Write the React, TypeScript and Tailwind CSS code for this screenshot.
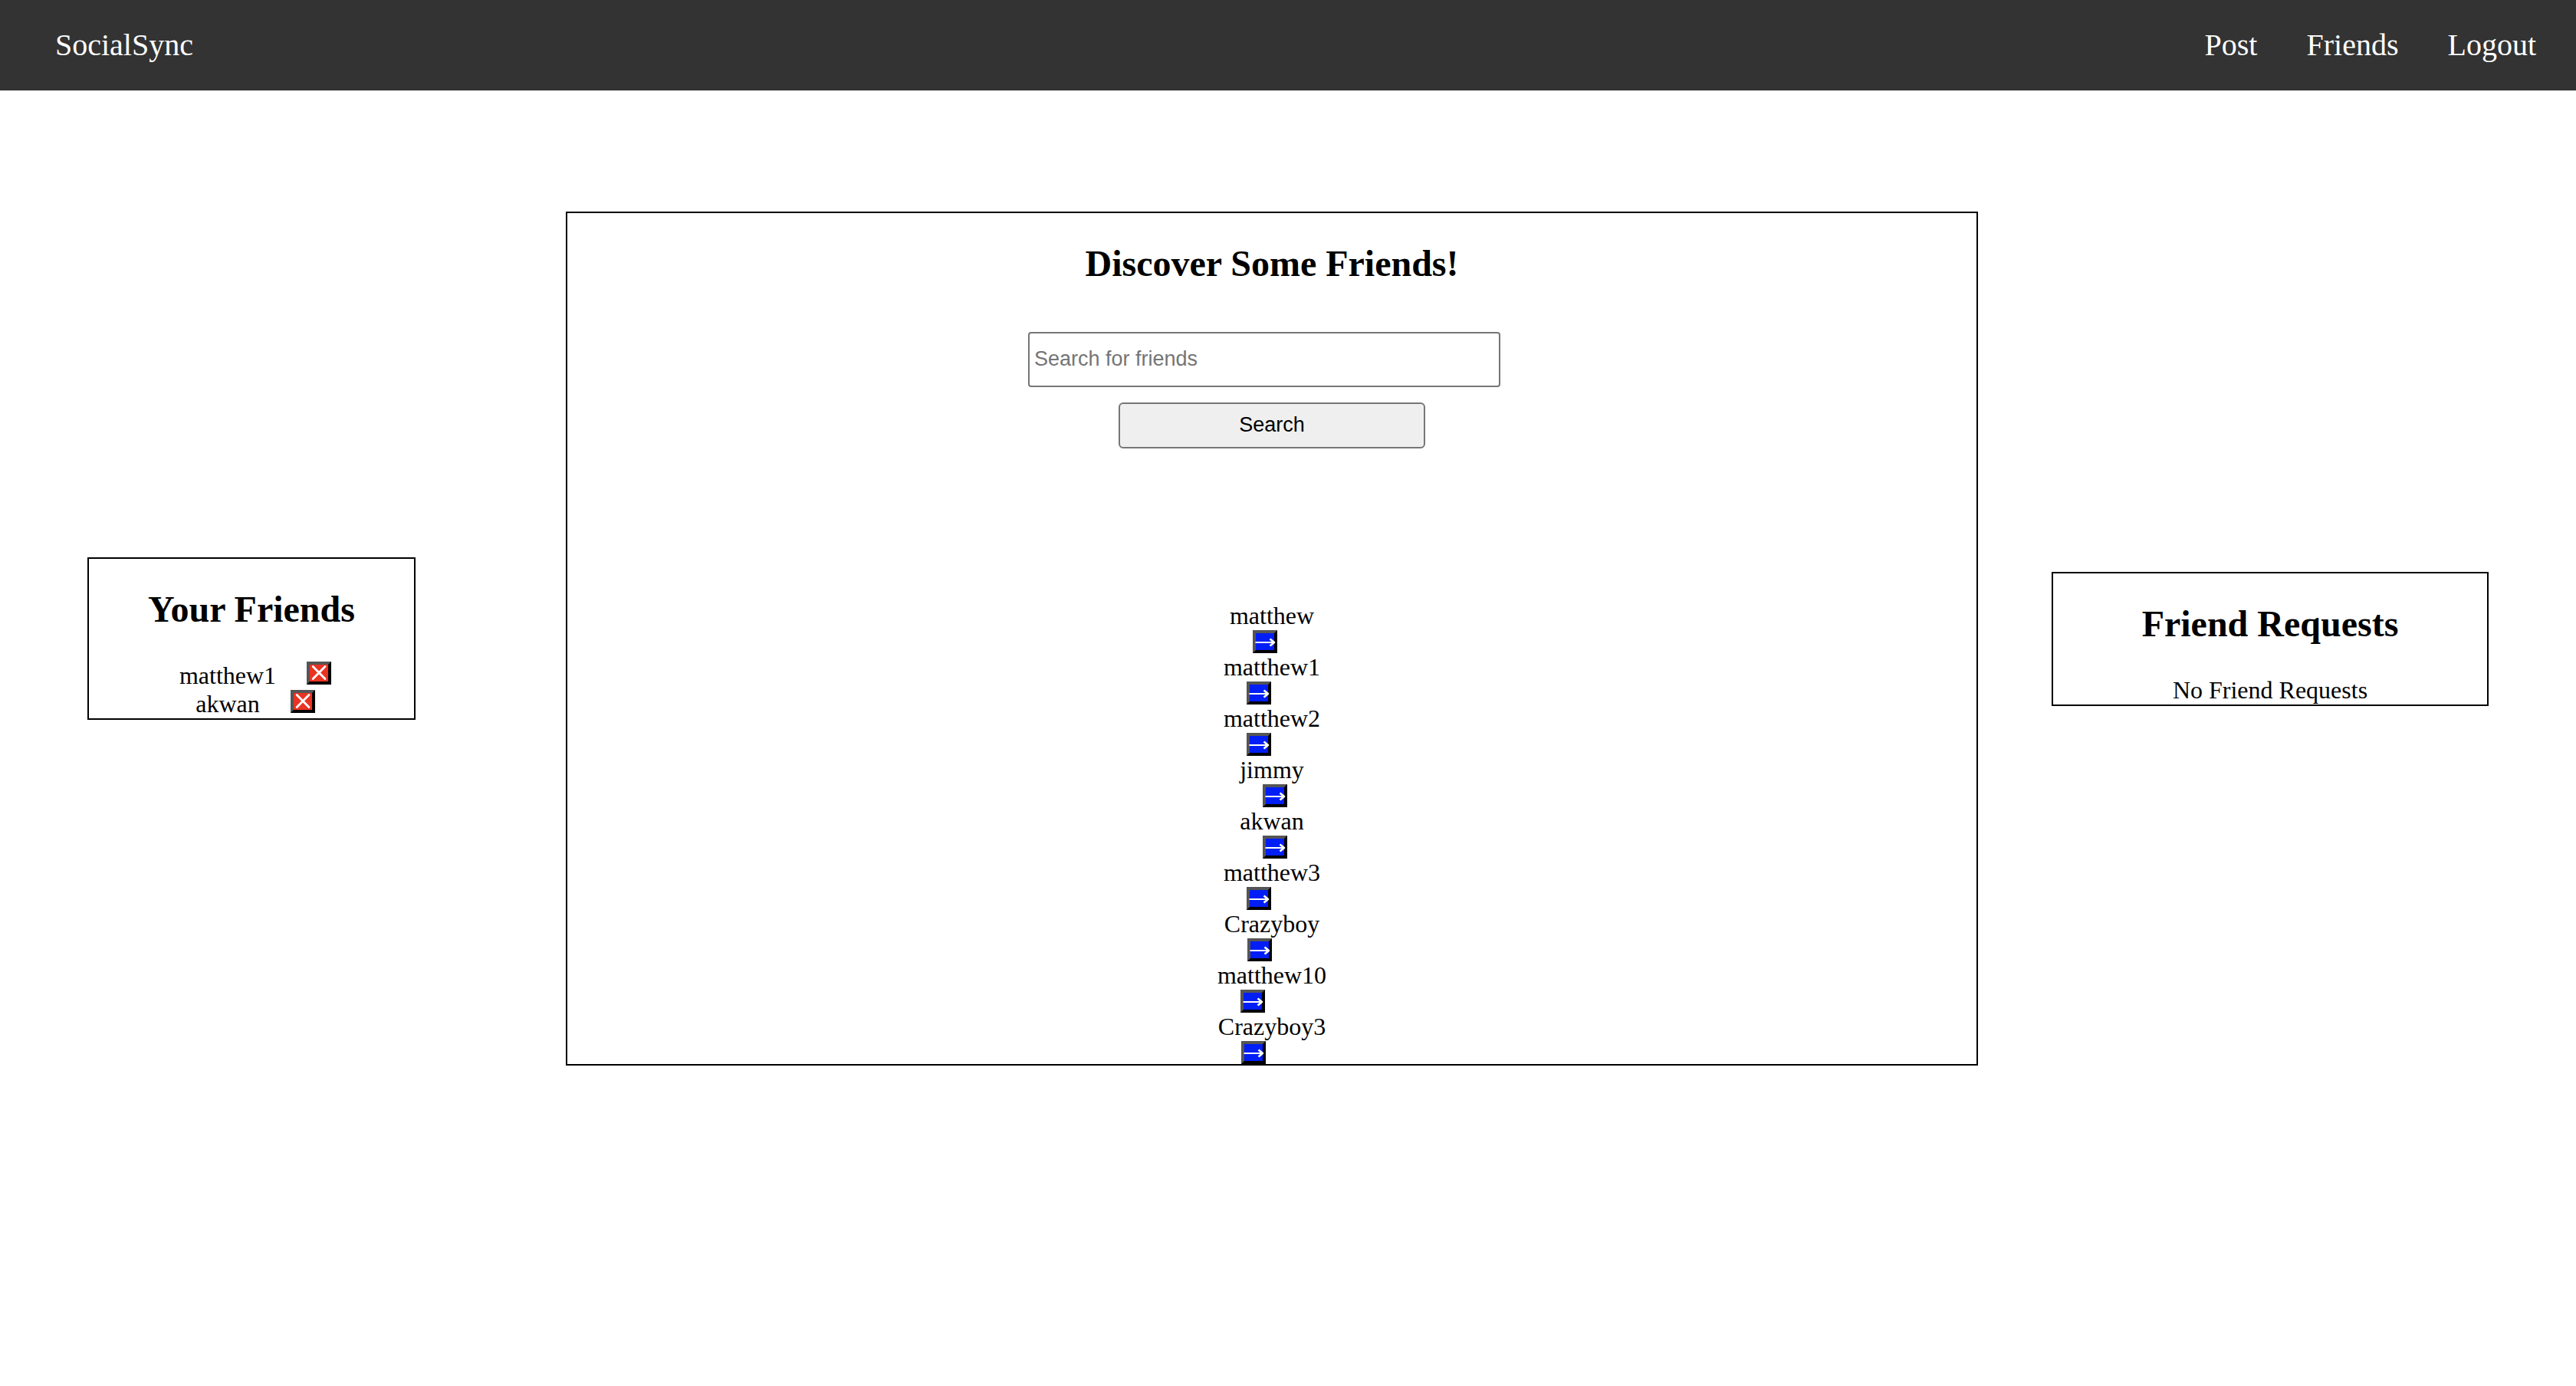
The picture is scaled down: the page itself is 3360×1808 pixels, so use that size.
import React from "react";

const friends = ["matthew1", "akwan"];
const suggestions = [
  "matthew",
  "matthew1",
  "matthew2",
  "jimmy",
  "akwan",
  "matthew3",
  "Crazyboy",
  "matthew10",
  "Crazyboy3",
];

function Panel({ title, className, children }: { title: string; className?: string; children: React.ReactNode }) {
  return (
    <section className={`border-2 border-black text-center ${className ?? ""}`}>
      <h2 className="mt-10 mb-[42px] text-[48px] leading-[52px] font-bold">{title}</h2>
      {children}
    </section>
  );
}

function NavLink({ label }: { label: string }) {
  return (
    <a href="#" className="px-8">
      {label}
    </a>
  );
}

export default function App() {
  return (
    <div className="min-h-screen bg-white font-['Liberation_Serif',serif] text-[32px] leading-[37px] text-black">
      <nav className="flex items-center justify-between bg-[#333333] py-9 pr-5 pl-10 text-[40px] leading-[46px] text-white">
        <NavLink label="SocialSync" />
        <div className="flex">
          <NavLink label="Post" />
          <NavLink label="Friends" />
          <NavLink label="Logout" />
        </div>
      </nav>

      <main className="grid grid-cols-[528fr_1842fr_570fr] items-center gap-x-24 px-[114px] pt-[158px]">
        <Panel title="Your Friends" className="mr-[100px]">
          <ul className="pl-[10px]">
            {friends.map((name) => (
              <li key={name} className="flex items-start justify-center gap-10">
                <span>{name}</span>
                <button
                  type="button"
                  aria-label={`Remove ${name}`}
                  className="h-[30px] w-8 border-4 border-t-[#555555] border-r-black border-b-black border-l-[#555555] bg-[#ea3323]"
                >
                  <svg viewBox="0 0 24 22" className="h-[22px] w-6" fill="none" stroke="white" strokeWidth="2.8" strokeLinecap="round">
                    <path d="M4.2 2.4 L20 18.6 M20 2.4 L4.2 18.6" />
                  </svg>
                </button>
              </li>
            ))}
          </ul>
        </Panel>

        <Panel title="Discover Some Friends!">
          <form className="flex flex-col items-center gap-5 pt-[21px] font-['Liberation_Sans',sans-serif] text-[27px] leading-[30px]">
            <input
              type="text"
              aria-label="Search for friends"
              placeholder="Search for friends"
              className="mr-5 h-[72px] w-[616px] rounded-[4px] border-2 border-[#767676] px-[6px] pb-[2px] placeholder:text-[#757575]"
            />
            <button type="button" className="h-[60px] w-[400px] rounded-[6px] border-2 border-[#767676] bg-[#efefef] pb-[2px]">
              Search
            </button>
          </form>
          <ul className="mt-[200px] flex flex-col items-center">
            {suggestions.map((name) => (
              <li key={name} className="flex flex-col items-start">
                <span>{name}</span>
                <button
                  type="button"
                  aria-label={`Add ${name}`}
                  className="ml-[30px] h-[30px] w-8 border-4 border-t-[#555555] border-r-black border-b-black border-l-[#555555] bg-[#001ef5]"
                >
                  <svg
                    viewBox="0 0 24 22"
                    className="h-[22px] w-6 overflow-visible"
                    fill="none"
                    stroke="white"
                    strokeWidth="2"
                    strokeLinejoin="round"
                  >
                    <path d="M-0.5 12 H24" />
                    <path d="M18.5 7.5 L24 12 L18.5 16.5" strokeWidth="2.6" />
                  </svg>
                </button>
              </li>
            ))}
          </ul>
        </Panel>

        <Panel title="Friend Requests">
          <p>No Friend Requests</p>
        </Panel>
      </main>
    </div>
  );
}
